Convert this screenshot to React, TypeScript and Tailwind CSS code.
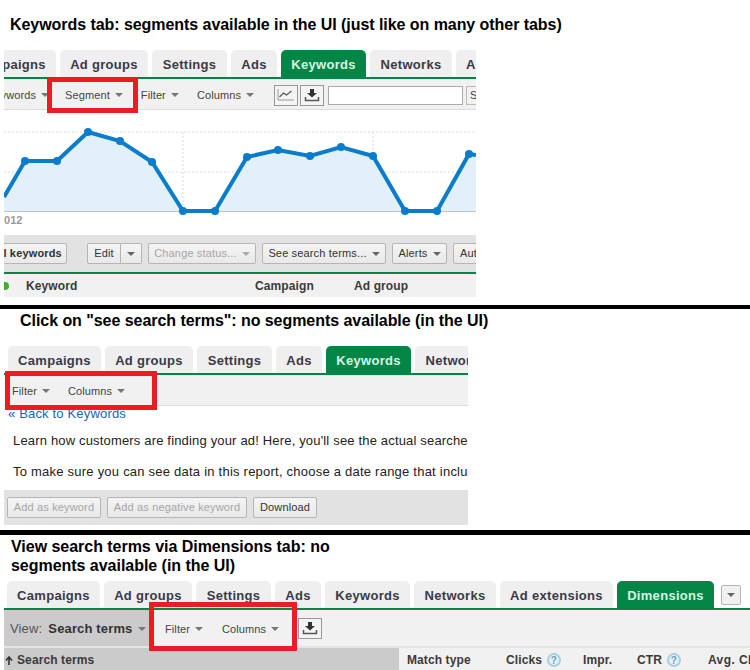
function Caret({ color = 'border-t-[#777]' }: { color?: string }) {
  return <span className={`inline-block h-0 w-0 border-x-[4px] border-t-[4px] border-x-transparent ${color}`} />;
}

const tabWidths: Record<string, string> = {
  Campaigns: 'w-[93px]',
  'Ad groups': 'w-[88px]',
  Settings: 'w-[75px]',
  Ads: 'w-[46px]',
  Keywords: 'w-[85px]',
  Networks: 'w-[82px]',
  'Ad extensions': 'w-[113px]',
  Dimensions: 'w-[97px]',
};

function Tabs({ items, active, className }: { items: string[]; active: string; className: string }) {
  return (
    <div className={`flex h-[27px] gap-[4px] ${className}`}>
      {items.map((t) => (
        <div
          key={t}
          className={`flex shrink-0 items-center justify-center rounded-t-[5px] pt-[2px] text-[13px] font-bold tracking-[0.3px] ${tabWidths[t]} ${
            t === active ? 'bg-[#038545] text-[#d9f3e4]' : 'bg-[#efefef] text-[#3a3a48]'
          }`}
        >
          {t}
        </div>
      ))}
    </div>
  );
}

function Menu({ label, className = '' }: { label: string; className?: string }) {
  return (
    <span className={`flex shrink-0 items-center gap-[5px] text-[11px] tracking-[0.1px] text-[#444] ${className}`}>
      {label}
      <Caret />
    </span>
  );
}

function Btn({
  label,
  disabled,
  caret,
  className = '',
}: {
  label: string;
  disabled?: boolean;
  caret?: boolean;
  className?: string;
}) {
  return (
    <span
      className={`flex h-[21px] shrink-0 items-center justify-center gap-[5px] rounded-[2px] border border-[#b5b5b5] bg-gradient-to-b from-[#f4f4f4] to-[#e9e9e9] text-[11px] tracking-[0.15px] ${
        disabled ? 'text-[#a6a6a6]' : 'text-[#333]'
      } ${className}`}
    >
      {label}
      {caret && <Caret color={disabled ? 'border-t-[#aaa]' : 'border-t-[#666]'} />}
    </span>
  );
}

function DownloadButton({ className = '' }: { className?: string }) {
  return (
    <span className={`flex h-[21px] w-[24px] shrink-0 items-center justify-center border border-[#999] bg-[#f4f4f4] ${className}`}>
      <svg width="16" height="14" viewBox="0 0 16 14">
        <path d="M6 1h4v4h3L8 9.500 3 5h3z" fill="#333" />
        <path d="M1.500 9v3.500h13V9" stroke="#555" strokeWidth="1.500" fill="none" />
      </svg>
    </span>
  );
}

function Help() {
  return (
    <span className="flex h-[14px] w-[14px] items-center justify-center rounded-full border-2 border-[#a9cfe0] bg-[#e6f1f6] text-[10px] font-bold text-[#6d9db8]">
      ?
    </span>
  );
}

function RedBox({ className }: { className: string }) {
  return <div className={`absolute border-[5px] border-[#ed1c24] ${className}`} />;
}

const points =
  '0,87 21,51 53,51 84,22 116,31 148,52 179,101 211,101 243,47 274,40 306,46 337,37 369,46 401,101 433,101 465,44 472,45';

function Chart() {
  return (
    <svg width="472" height="125" viewBox="0 0 472 125" className="block">
      <path d="M0 22H472M0 62H472M179 22V101M369 22V101" stroke="#dcdcdc" strokeDasharray="2 2" fill="none" />
      <polygon points={`0,101 ${points} 472,101`} fill="#e2f0fa" />
      <path d="M0 101.500H472" stroke="#c4c4c4" />
      <polyline points={points} fill="none" stroke="#0a7ccc" strokeWidth="4" />
      {points
        .split(' ')
        .slice(1, -1)
        .map((p) => {
          const [x, y] = p.split(',');
          return <circle key={p} cx={x} cy={y} r="4" fill="#0a7ccc" />;
        })}
      <text x="-6" y="114" fontSize="11" fontWeight="bold" fill="#9a9a9a" fontFamily="Liberation Sans">
        2012
      </text>
    </svg>
  );
}

function KeywordsPanel() {
  return (
    <div className="ml-[4px] w-[472px] overflow-hidden">
      <Tabs
        items={['Campaigns', 'Ad groups', 'Settings', 'Ads', 'Keywords', 'Networks', 'Ad extensions']}
        active="Keywords"
        className="-ml-[41px]"
      />
      <div className="h-[2px] bg-[#038545]" />
      <div className="flex h-[31px] items-center border-b border-[#dcdcdc] bg-[#f1f1f1] pt-[2px]">
        <Menu label="Keywords" className="-ml-[17px]" />
        <span className="ml-[5px] h-[22px] w-px bg-[#ccc]" />
        <Menu label="Segment" className="ml-[11px]" />
        <Menu label="Filter" className="ml-[18px]" />
        <Menu label="Columns" className="ml-[18px]" />
        <span className="ml-[14px] h-[31px] w-px bg-[#ccc]" />
        <span className="ml-[6px] flex h-[21px] w-[24px] shrink-0 items-center justify-center border border-[#999] bg-[#f4f4f4]">
          <svg width="18" height="12" viewBox="0 0 18 12">
            <path d="M1 0v11h16" stroke="#999" fill="none" />
            <path d="M2.500 8l4-4 3 2 5-4" stroke="#555" strokeWidth="1.200" fill="none" />
          </svg>
        </span>
        <DownloadButton className="ml-[2px]" />
        <span className="ml-[4px] h-[19px] w-[135px] shrink-0 border border-[#aaa] bg-white" />
        <span className="ml-[3px] h-[19px] w-[20px] shrink-0 border border-[#bbb] bg-[#f1f1f1] pl-[3px] text-[11px] text-[#444]">S</span>
      </div>
      <Chart />
      <div className="flex h-[37px] items-center bg-[#e2e2e2]">
        <Btn label="All keywords" className="-ml-[17px] w-[80px] font-bold tracking-[0.1px]" />
        <span className="ml-[11px] h-[21px] w-px bg-[#ccc]" />
        <span className="ml-[9px] flex">
          <Btn label="Edit" className="w-[34px] rounded-r-none" />
          <Btn label="" caret className="w-[21px] rounded-l-none border-l-0" />
        </span>
        <Btn label="Change status..." disabled caret className="ml-[6px] w-[108px]" />
        <Btn label="See search terms..." caret className="ml-[6px] w-[124px]" />
        <Btn label="Alerts" caret className="ml-[6px] w-[55px]" />
        <Btn label="Automate" caret className="ml-[6px] w-[70px] !justify-start pl-[6px]" />
      </div>
      <div className="h-[2px] bg-[#038545]" />
      <div className="flex h-[23px] items-center bg-[#f1f1f1] text-[12px] font-bold tracking-[0.1px] text-[#3a3a3a]">
        <span className="-ml-[3px] h-[8px] w-[8px] shrink-0 rounded-full bg-[#43b02a]" />
        <span className="ml-[17px] w-[229px] shrink-0">Keyword</span>
        <span className="w-[99px] shrink-0">Campaign</span>
        <span className="shrink-0">Ad group</span>
      </div>
    </div>
  );
}

function SearchTermsPanel() {
  return (
    <div className="ml-[4px] w-[464px] overflow-hidden">
      <Tabs
        items={['Campaigns', 'Ad groups', 'Settings', 'Ads', 'Keywords', 'Networks']}
        active="Keywords"
        className="ml-[4px]"
      />
      <div className="h-[2px] bg-[#038545]" />
      <div className="flex h-[31px] items-center border-b border-[#dcdcdc] bg-[#f1f1f1] pt-[2px]">
        <Menu label="Filter" className="ml-[8px]" />
        <Menu label="Columns" className="ml-[18px]" />
      </div>
      <p className="ml-[4px] h-[15px] whitespace-nowrap text-[13px] leading-[15px] tracking-[0.17px] text-[#1a5fcc]">« Back to Keywords</p>
      <div className="whitespace-nowrap text-[13px] leading-[15px] text-[#222]">
        <p className="ml-[9px] mt-[12px] tracking-[0.17px]">Learn how customers are finding your ad! Here, you'll see the actual searches</p>
        <p className="ml-[9px] mt-[16px] tracking-[0.23px]">To make sure you can see data in this report, choose a date range that includes</p>
      </div>
      <div className="mt-[11px] flex h-[35px] items-center bg-[#e2e2e2]">
        <Btn label="Add as keyword" disabled className="ml-[3px] w-[94px]" />
        <Btn label="Add as negative keyword" disabled className="ml-[6px] w-[140px]" />
        <Btn label="Download" className="ml-[6px] w-[64px]" />
      </div>
    </div>
  );
}

function DimensionsPanel() {
  return (
    <div className="ml-[4px] w-[746px] overflow-hidden">
      <div className="flex items-start">
        <Tabs
          items={['Campaigns', 'Ad groups', 'Settings', 'Ads', 'Keywords', 'Networks', 'Ad extensions', 'Dimensions']}
          active="Dimensions"
          className="ml-[3px]"
        />
        <span className="ml-[7px] mt-[4px] flex h-[20px] w-[20px] items-center justify-center rounded-[2px] border border-[#b5b5b5] bg-[#f1f1f1]">
          <Caret color="border-t-[#666]" />
        </span>
      </div>
      <div className="h-[2px] bg-[#038545]" />
      <div className="flex h-[36px] items-center bg-[#f1f1f1]">
        <div className="flex h-full w-[150px] shrink-0 items-center bg-[#cbcbcb] pl-[6px] pt-[2px] text-[13px] tracking-[0.15px] text-[#555]">
          View:
          <span className="ml-[6px] font-bold text-[#333]">Search terms</span>
          <span className="ml-[5px] flex">
            <Caret />
          </span>
        </div>
        <Menu label="Filter" className="ml-[11px] pt-[2px]" />
        <Menu label="Columns" className="ml-[19px] pt-[2px]" />
        <span className="ml-[13px] h-[22px] w-px bg-[#ccc]" />
        <DownloadButton className="ml-[5px]" />
      </div>
      <div className="h-[2px] bg-[#e4e4e4]" />
      <div className="flex h-[22px] items-center bg-[#f1f1f1] pt-0 text-[12px] font-bold tracking-[0.1px] text-[#3a3a3a]">
        <span className="flex h-full w-[395px] shrink-0 items-center gap-[4px] bg-[#cbcbcb] pl-[1px] pt-[2px]">
          <svg width="8" height="9" viewBox="0 0 8 9">
            <path d="M4 9V1.500M1 4.500l3-3.500 3 3.500" stroke="#333" strokeWidth="1.600" fill="none" />
          </svg>
          Search terms
        </span>
        <span className="ml-[8px] w-[99px] shrink-0 pt-[2px]">Match type</span>
        <span className="flex w-[77px] shrink-0 items-center gap-[5px] pt-[2px]">
          Clicks <Help />
        </span>
        <span className="w-[54px] shrink-0 pt-[2px]">Impr.</span>
        <span className="flex w-[71px] shrink-0 items-center gap-[5px] pt-[2px]">
          CTR <Help />
        </span>
        <span className="shrink-0 whitespace-nowrap pt-[2px] tracking-[0.4px]">Avg. CPC</span>
      </div>
    </div>
  );
}

export default function App() {
  return (
    <div className="relative h-[670px] w-[750px] overflow-hidden bg-white font-['Liberation_Sans',Arial,sans-serif]">
      <section className="h-[305px]">
        <h2 className="flex h-[50px] items-center pl-[10px] text-[16px] font-bold tracking-[-0.055px] text-black">
          Keywords tab: segments available in the UI (just like on many other tabs)
        </h2>
        <KeywordsPanel />
      </section>
      <div className="h-[4px] bg-black" />
      <section className="h-[221px]">
        <h2 className="h-[37px] pl-[20px] pt-[2px] text-[16px] font-bold leading-[19px] tracking-[-0.05px] text-black">
          Click on "see search terms": no segments available (in the UI)
        </h2>
        <SearchTermsPanel />
      </section>
      <div className="h-[5px] bg-black" />
      <section>
        <h2 className="h-[46px] w-[340px] pl-[11px] pt-[2px] text-[16px] font-bold leading-[19px] tracking-[-0.03px] text-black">
          View search terms via Dimensions tab: no segments available (in the UI)
        </h2>
        <DimensionsPanel />
      </section>
      <RedBox className="left-[47px] top-[77px] h-[36px] w-[91px]" />
      <RedBox className="left-[5px] top-[371px] h-[39px] w-[152px]" />
      <RedBox className="left-[149px] top-[602px] h-[49px] w-[148px]" />
    </div>
  );
}
